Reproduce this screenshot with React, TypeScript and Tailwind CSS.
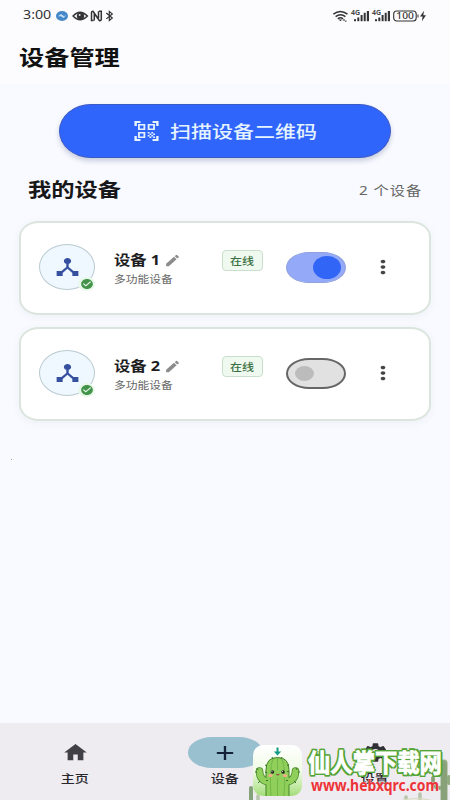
import type { ReactNode } from "react";
import {
  MdAdd,
  MdCheckCircle,
  MdDeviceHub,
  MdEdit,
  MdHome,
  MdMoreVert,
  MdQrCodeScanner,
  MdSettings,
} from "react-icons/md";

/** Label set in an extended width, growing rightwards from its left edge. */
function Wide({ className, children }: { className: string; children: ReactNode }) {
  return (
    <div className={`shrink-0 ${className}`}>
      <span className="inline-block origin-left scale-x-[1.2] whitespace-nowrap">{children}</span>
    </div>
  );
}

function Signal() {
  return (
    <svg className="h-[12px] w-[19px] overflow-visible" viewBox="0 0 19 12">
      <text x="0" y="5.2" fontSize="6.5" fontWeight="600" fill="#333" textLength="9" lengthAdjust="spacingAndGlyphs">4G</text>
      <g fill="#333">
        <rect x="3" y="9.2" width="2" height="2" />
        <rect x="6.3" y="7.5" width="2" height="3.7" />
        <rect x="9.6" y="5" width="2" height="6.2" />
        <rect x="12.7" y="2.8" width="2" height="8.4" />
        <rect x="15.8" y="1" width="2.2" height="10.2" />
      </g>
    </svg>
  );
}

function StatusBar() {
  return (
    <div className="flex h-[31px] items-center pl-[23px] pr-[23px] text-[#333]">
      <div className="w-[33px] shrink-0 text-[12.5px]">
        <span className="inline-block origin-left scale-x-[1.14] whitespace-nowrap">3:00</span>
      </div>
      <svg className="h-[12px] w-[58px]" viewBox="0 0 58 12">
        <ellipse cx="6" cy="6" rx="6" ry="5" fill="#4689c8" />
        <path d="M2 6.3 5 4l3 2.2L10.2 5 7.5 8 4.8 6.2z" fill="#c4dff5" />
        <path d="M17 6q7-7.5 14.5 0q-7.5 7.5-14.5 0z" fill="none" stroke="#333" strokeWidth="1.3" />
        <ellipse cx="24.5" cy="6" rx="3.7" ry="3.2" fill="#333" />
        <circle cx="23.6" cy="5" r="1" fill="#ddd" />
        <path d="M37.5 10.6h-2V2.5q0-1.3 1.5-1.3l5 7.2M43 1.3h2.3v8q0 1.5-1.8 1.400L38.300 3.500v7M42.500 1.300v7" fill="none" stroke="#333" strokeWidth="1.500" />
        <path d="m50.300 3 6 5-3 2.500v-9l3 2.400-6 5" fill="none" stroke="#333" strokeWidth="1.200" />
      </svg>
      <div className="ml-auto flex items-center">
        <svg className="mr-[3px] h-[12px] w-[15px]" viewBox="0 0 15 12">
          <g fill="none" stroke="#333" strokeWidth="1.500">
            <path d="M.3 4.200q7-5.500 14.200 0M2.600 6.700q5-3.700 9.800 0M4.800 8.800q2.600-2 5.300 0" />
          </g>
          <path d="m7.400 11.300-1.800-1.700h3.600zM9.500 10.500l1.500-1.400 1.300 1.400zM11.500 10.700H14l-1.200 1.200z" fill="#333" />
        </svg>
        <Signal />
        <span className="w-[2px]" />
        <Signal />
        <svg className="ml-[2px] h-[12px] w-[34px]" viewBox="0 0 34 12">
          <rect x=".7" y="1" width="22.500" height="10" rx="3" fill="none" stroke="#333" strokeWidth="1.100" />
          <text x="3.300" y="9.200" fontSize="9" fontWeight="500" fill="#333" textLength="17.500" lengthAdjust="spacingAndGlyphs">100</text>
          <path d="M24.500 4.500h1v3h-1zM31 .8l-4 5.800h2.600l-.7 4.600 4.100-6H30.300z" fill="#333" />
        </svg>
      </div>
    </div>
  );
}

function Toggle({ on }: { on: boolean }) {
  return on ? (
    <div className="flex h-[31px] w-[60px] items-center justify-end rounded-[23px/15.5px] border border-[#91a2de] bg-[#94aaf8] pr-[4px]">
      <div className="h-[23px] w-[28px] rounded-[50%] bg-[#3065f5]" />
    </div>
  ) : (
    <div className="flex h-[31px] w-[60px] items-center rounded-[23px/15.5px] border-2 border-[#666] bg-[#e1e1e1] pl-[7px]">
      <div className="h-[15px] w-[19px] rounded-[50%] bg-[#bcbcbc]" />
    </div>
  );
}

function DeviceCard({ name, on }: { name: string; on: boolean }) {
  return (
    <div className="flex h-[94px] rounded-[20px/16px] border-2 border-[#dbe5dd] bg-[#fefffe] pl-[18px] shadow-[0_2px_8px_rgba(60,80,110,0.06)]">
      <div className="relative mt-[21px] flex h-[46px] w-[56px] shrink-0 items-center justify-center rounded-[50%] border-[1.5px] border-[#b9cad1] bg-[#eff8fe]">
        <MdDeviceHub preserveAspectRatio="none" className="h-[24px] w-[29px] text-[#3650a0]" />
        <div className="absolute -right-[1px] -bottom-[2px] flex h-[14px] w-[17px] items-center justify-center rounded-[50%] bg-[#e8f8ea]">
          <MdCheckCircle preserveAspectRatio="none" className="h-[12px] w-[14px] text-[#43944a]" />
        </div>
      </div>
      <div className="ml-[19px] w-[108px] shrink-0 pt-[27px]">
        <div className="flex h-[20px] items-center">
          <Wide className="w-[50px] text-[13.6px] leading-[20px] font-bold text-[#1d1d1f]">{name}</Wide>
          <MdEdit preserveAspectRatio="none" className="h-[15px] w-[17px] text-[#8c8c8c]" />
        </div>
        <Wide className="w-[60px] pt-px text-[9.8px] leading-[18px] text-[#666]">多功能设备</Wide>
      </div>
      <div className="mt-[27px] flex h-[21px] w-[41px] shrink-0 items-center rounded-[4px] border-[1.5px] border-[#c9dfcc] bg-[#eff9f0] pl-[7px]">
        <Wide className="w-[26px] text-[10px] leading-[18px] font-medium text-[#3c7042]">在线</Wide>
      </div>
      <div className="ml-[23px] mt-[29px]">
        <Toggle on={on} />
      </div>
      <MdMoreVert preserveAspectRatio="none" className="ml-[23px] mt-[33px] h-[22px] w-[28px] shrink-0 text-[#444]" />
    </div>
  );
}

function NavItem({ label, active, icon }: { label: string; active?: boolean; icon: ReactNode }) {
  return (
    <div className="flex w-[150px] flex-col items-center pt-[13px]">
      <div className={`flex h-[31px] w-[75px] items-center justify-center rounded-[24px/15.5px] ${active ? "bg-[#98c0cf]" : ""}`}>
        {icon}
      </div>
      <div className="pt-px text-center text-[11.7px] leading-[18px] font-medium text-[#28272c]">
        <span className="inline-block scale-x-[1.2]">{label}</span>
      </div>
    </div>
  );
}

function CactusMark() {
  return (
    <div className="absolute top-[745px] left-[253px] h-[51px] w-[49px] overflow-hidden rounded-[10px] bg-linear-to-b from-white via-[#f0fce5] to-[#a5dd7a]">
      <svg className="h-full w-full" viewBox="0 0 49 51">
        <g fill="none" stroke="#47852b" strokeWidth="7.500" strokeLinecap="round" strokeLinejoin="round">
          <path d="M6.500 26q0 10 10 11M42.500 26q0 10-10 11" />
        </g>
        <path d="M13 53V25q0-12.500 11.500-12.500T36 25v28z" fill="#8fcf5a" stroke="#47852b" strokeWidth="1" />
        <g fill="none" stroke="#8fcf5a" strokeWidth="6" strokeLinecap="round">
          <path d="M6.500 26q0 10 10 11M42.500 26q0 10-10 11" />
        </g>
        <path d="M20 14q-4 8-2 38M24.500 13v12M24.500 33v19M29 14q4 8 2 38" fill="none" stroke="#69b146" strokeWidth=".8" />
        <path d="m12 20 2 1m-2 6 2 .5m-1 8 2 0m21-16-2 1m2 6-2 0m1 9-2 0M19 12l1 2m9-2-1 2M2 27h2m0-4 1 2m38-2 1 2m3 2h-2M5 38l2-2m36 2-2-2" stroke="#37742a" strokeWidth="1" />
        <circle cx="19.500" cy="27" r="1.700" fill="#25241e" />
        <circle cx="30" cy="27" r="1.700" fill="#25241e" />
        <circle cx="19" cy="26.500" r=".5" fill="#fff" />
        <circle cx="29.500" cy="26.500" r=".5" fill="#fff" />
        <ellipse cx="17.500" cy="30.500" rx="2.200" ry="1.500" fill="#f3ad8b" />
        <ellipse cx="32" cy="30.500" rx="2.200" ry="1.500" fill="#f3ad8b" />
        <path d="M23 29q2 2.500 3.500 0" fill="#de5a52" stroke="#554331" strokeWidth=".7" />
        <path d="M23.500 2.500h2v4h2.700l-3.700 4-3.700-4h2.700z" fill="#159c87" />
      </svg>
    </div>
  );
}

function Watermark() {
  return (
    <>
      <svg className="absolute top-[755px] left-[244px] h-[45px] w-[206px]" viewBox="0 0 206 45">
        <g fill="none" strokeLinecap="round" strokeLinejoin="round">
          <path d="M200 46V8" stroke="#93ab83" strokeWidth="7" />
          <path d="M189 23v5q0 5 8 5M205 28v-6" stroke="#93ab83" strokeWidth="4" />
          <path d="M200 46V7M198 46V9M202 46V9M189 22v6q0 5 7 5" stroke="#6e8c61" strokeWidth=".6" />
          <path d="M7 47V33" stroke="#84a279" strokeWidth="4" />
          <path d="M14 47v-6M162 47v-5M176 47v-8" stroke="#b6c5ab" strokeWidth="3.500" />
          <path d="M156 46q12-4 30-1" stroke="#dcddc4" strokeWidth="1.200" />
        </g>
      </svg>
      <CactusMark />
      <div className="absolute top-[745px] left-[308px] h-[34px] w-[134px] text-[25.500px] leading-[34px] font-bold text-white">
        <span className="inline-block origin-left scale-x-[0.875] whitespace-nowrap [-webkit-text-stroke:0.8px_white] [text-shadow:2.400px_0_#55a436,-2.400px_0_#55a436,0_2.200px_#55a436,0_-2.200px_#55a436,1.700px_1.700px_#55a436,-1.700px_1.700px_#55a436,1.700px_-1.700px_#55a436,-1.700px_-1.700px_#55a436]">仙人掌下载网</span>
      </div>
      <svg className="absolute top-[776px] left-[307px] h-[22px] w-[137px] overflow-visible" viewBox="0 0 137 22">
        <text x="4" y="14.500" fontFamily="'Noto Sans', sans-serif" fontSize="15.500" fontWeight="700" fill="#ed3338" stroke="#f6eff4" strokeWidth="0.600" paintOrder="stroke" textLength="128" lengthAdjust="spacingAndGlyphs">www.hebxqrc.com</text>
      </svg>
    </>
  );
}

export default function App() {
  return (
    <div className="relative flex h-[800px] w-[450px] flex-col overflow-hidden bg-[#f8faff] font-['Noto_Sans','Noto_Sans_CJK_SC',sans-serif]">
      <header className="h-[84px] shrink-0 bg-[#fcfcff]">
        <StatusBar />
        <Wide className="ml-[19px] w-[104px] pt-[11px] text-[21px] leading-[30px] font-bold text-[#111]">设备管理</Wide>
      </header>
      <main className="flex-1 px-[19px] pt-[20px]">
        <button className="ml-[40px] flex h-[54px] w-[332px] items-center rounded-[32px/27px] border border-[#3c5ac6] bg-[#3065fc] pl-[72px] text-left text-[#e5f3ff] shadow-[0_3px_5px_rgba(55,70,120,0.25)]">
          <MdQrCodeScanner preserveAspectRatio="none" className="h-[24px] w-[29px] shrink-0" />
          <Wide className="ml-[9px] w-[150px] text-[17.5px] leading-[26px] font-medium">扫描设备二维码</Wide>
        </button>
        <div className="flex h-[63px] items-center justify-between pl-[9px] pr-[7px]">
          <Wide className="w-[96px] text-[19.4px] leading-[28px] font-bold text-[#171719]">我的设备</Wide>
          <Wide className="w-[65px] text-[12.7px] leading-[20px] text-[#666]">
            <span className="tracking-[0.8px]">2 个设备</span>
          </Wide>
        </div>
        <div className="flex flex-col gap-[12px]">
          <DeviceCard name="设备 1" on />
          <DeviceCard name="设备 2" on={false} />
        </div>
        <div className="mt-[38px] -ml-[8px] size-px bg-[#98a3a8]" />
      </main>
      <nav className="flex h-[77px] shrink-0 border-t border-[#efedf2] bg-[#eeebf1]">
        <NavItem label="主页" icon={<MdHome preserveAspectRatio="none" className="h-[23px] w-[27px] text-[#424047]" />} />
        <NavItem label="设备" active icon={<MdAdd preserveAspectRatio="none" className="h-[24px] w-[28px] text-[#142238]" />} />
        <NavItem label="设置" icon={<MdSettings preserveAspectRatio="none" className="h-[23px] w-[27px] text-[#303036]" />} />
      </nav>
      <Watermark />
    </div>
  );
}
